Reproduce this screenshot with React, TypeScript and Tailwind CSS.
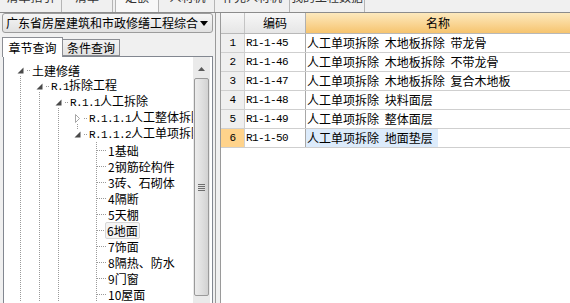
import type { ReactNode } from 'react';

const cjk = "font-['Noto_Sans_CJK_SC',sans-serif]";
const mono = "font-['Liberation_Mono',monospace] text-[11px] tracking-[-0.6px]";

type Guide = 'full' | 'down' | 'up' | 'none' | 'hline' | 'open' | 'closed' | 'openUp' | 'closedDown';

const Cell = ({ g }: { g: Guide }) => (
  <svg width="19" height="16" className="shrink-0" viewBox="0 0 19 16">
    {(g === 'full' || g === 'hline') && (
      <line x1="9.5" y1="0" x2="9.5" y2="16" stroke="#9a9a9a" strokeDasharray="1 1" />
    )}
    {(g === 'down' || g === 'open' || g === 'closedDown') && (
      <line x1="9.5" y1="8" x2="9.5" y2="16" stroke="#9a9a9a" strokeDasharray="1 1" />
    )}
    {(g === 'up' || g === 'openUp') && (
      <line x1="9.5" y1="0" x2="9.5" y2="8" stroke="#9a9a9a" strokeDasharray="1 1" />
    )}
    {(g === 'hline' || g === 'open' || g === 'openUp' || g === 'closed' || g === 'closedDown') && (
      <line x1="10" y1="8.5" x2="19" y2="8.5" stroke="#9a9a9a" strokeDasharray="1 1" />
    )}
    {(g === 'open' || g === 'openUp') && (
      <>
        <rect x="5" y="3" width="10" height="10" fill="#ffffff" />
        <polygon points="12.5,5.5 12.5,11.5 6.5,11.5" fill="#4a4a4a" />
      </>
    )}
    {(g === 'closed' || g === 'closedDown') && (
      <>
        <rect x="5" y="3" width="10" height="10" fill="#ffffff" />
        <polygon points="7.5,4.5 11.5,8.5 7.5,12.5" fill="#ffffff" stroke="#a6a6a6" />
      </>
    )}
  </svg>
);

type Row = { guides: Guide[]; label: ReactNode; selected?: boolean };

const R = ({ t }: { t: string }) => <span className={mono}>{t}</span>;

const leaves = ['1基础', '2钢筋砼构件', '3砖、石砌体', '4隔断', '5天棚', '6地面', '7饰面', '8隔热、防水', '9门窗', '10屋面'];

const rows: Row[] = [
  { guides: ['open'], label: '土建修缮' },
  { guides: ['full', 'open'], label: <><R t="R.1" />拆除工程</> },
  { guides: ['full', 'full', 'open'], label: <><R t="R.1.1" />人工拆除</> },
  { guides: ['full', 'full', 'full', 'closedDown'], label: <><R t="R.1.1.1" />人工整体拆除</> },
  { guides: ['full', 'full', 'full', 'openUp'], label: <><R t="R.1.1.2" />人工单项拆除</> },
  ...leaves.map((l) => ({
    guides: ['full', 'full', 'full', 'none', 'hline'] as Guide[],
    label: l,
    selected: l === '6地面',
  })),
];

const topTabs = [
  { t: '清单指引', w: 'w-[62px]' },
  { t: '清单', w: 'w-[51px]' },
  { t: '定额', w: 'w-[44px]', active: true },
  { t: '人材机', w: 'w-[54px]' },
  { t: '补充人材机', w: 'w-[75px]' },
  { t: '我的工程数据', w: 'w-[75px]' },
];

const items = [
  { code: 'R1-1-45', name: '人工单项拆除 木地板拆除 带龙骨' },
  { code: 'R1-1-46', name: '人工单项拆除 木地板拆除 不带龙骨' },
  { code: 'R1-1-47', name: '人工单项拆除 木地板拆除 复合木地板' },
  { code: 'R1-1-48', name: '人工单项拆除 块料面层' },
  { code: 'R1-1-49', name: '人工单项拆除 整体面层' },
  { code: 'R1-1-50', name: '人工单项拆除 地面垫层' },
];

export default function App() {
  return (
    <div className={`w-[570px] h-[303px] overflow-hidden bg-[#f0f0f0] text-[12px] text-black ${cjk}`}>
      {/* cut-off ribbon tabs */}
      <div className="flex h-[13px] border-b border-[#8c8c8c] overflow-hidden">
        {topTabs.map((tab) => (
          <div
            key={tab.t}
            className={`${tab.w} h-[12px] flex justify-center border-r border-[#b5b5b5] overflow-hidden ${tab.active ? 'bg-[#f8f8f8] border-l mx-[2px]' : ''}`}
          >
            <span className="leading-[12px] mt-[-9px] text-[#333]">{tab.t}</span>
          </div>
        ))}
      </div>

      <div className="flex h-[290px]">
        {/* left panel */}
        <div className="w-[213px] flex flex-col">
          <div className="ml-[2px] w-[211px] h-[20px] flex items-center justify-between px-[3px] border border-[#9c9c9c] rounded-[3px] bg-gradient-to-b from-[#f6f6f6] to-[#e1e1e1]">
            <span className="leading-[16px] whitespace-nowrap">广东省房屋建筑和市政修缮工程综合</span>
            <svg width="8" height="5" viewBox="0 0 8 5" className="mr-[1px]">
              <polygon points="0,0 8,0 4,5" fill="#000" />
            </svg>
          </div>

          <div className="flex items-end h-[23px] pl-[2px] relative z-10">
            <div className="h-[20px] w-[61px] bg-white border border-b-0 border-[#8c8e94] flex items-center justify-center mb-[-1px] leading-none">
              章节查询
            </div>
            <div className="h-[17px] w-[57px] border border-l-0 border-[#8c8e94] bg-gradient-to-b from-[#f3f3f3] to-[#e2e2e2] flex items-center justify-center leading-none">
              条件查询
            </div>
          </div>

          <div className="ml-[3px] flex-1 border border-b-0 border-[#828790] bg-white flex overflow-hidden">
            <div className="w-[189px] pt-[5px] overflow-hidden">
              {rows.map((r, i) => (
                <div key={i} className="h-[16px] flex items-center whitespace-nowrap pl-[7px]">
                  {r.guides.map((g, j) => (
                    <Cell key={j} g={g} />
                  ))}
                  <span
                    className={`leading-[15px] ${r.selected ? 'border border-[#d6d6d6] bg-[#f4f4f4] rounded-[2px] px-[1px] ml-[-1px]' : 'ml-[2px]'}`}
                  >
                    {r.label}
                  </span>
                </div>
              ))}
            </div>
            {/* scrollbar */}
            <div className="w-[17px] bg-[#eaeaea] flex flex-col pt-[2px]">
              <div className="h-[19px] flex items-center justify-center">
                <svg width="7" height="4" viewBox="0 0 7 4">
                  <polygon points="0,4 7,4 3.5,0" fill="#5a5a5a" />
                </svg>
              </div>
              <div className="mx-[1px] h-[218px] rounded-[2px] border border-[#9a9a9a] bg-gradient-to-r from-[#ececec] via-[#e0e0e0] to-[#d2d2d2] flex flex-col items-center justify-center gap-[1px]">
                <div className="w-[7px] h-px bg-[#6e6e6e]" />
                <div className="w-[7px] h-px bg-[#6e6e6e]" />
                <div className="w-[7px] h-px bg-[#6e6e6e]" />
                <div className="w-[7px] h-px bg-[#6e6e6e]" />
              </div>
            </div>
          </div>
        </div>

        {/* splitter */}
        <div className="w-[7px] flex">
          <div className="ml-[2px] w-px bg-[#9a9a9a]" />
        </div>

        {/* grid */}
        <div className="flex-1 bg-white border-l border-[#9a9a9a] overflow-hidden">
          <div className="grid grid-cols-[24px_61px_1fr] h-[21px] border-b border-[#b8b8b8]">
            <div className="border-r border-[#c4c4c4] bg-gradient-to-b from-[#f7f7f7] to-[#e6e6e6]" />
            <div className="border-r border-[#b0b0b0] bg-gradient-to-b from-[#f7f7f7] to-[#e6e6e6] flex items-center justify-center">
              编码
            </div>
            <div className="bg-gradient-to-b from-[#fde9bd] to-[#f6c46e] flex items-center justify-center">
              名称
            </div>
          </div>
          {items.map((it, i) => {
            const sel = i === items.length - 1;
            return (
              <div key={it.code} className="grid grid-cols-[24px_61px_1fr] h-[19px] border-b border-[#cfcfcf]">
                <div
                  className={`border-r border-[#d0d0d0] flex items-center justify-center ${mono} ${sel ? 'bg-[#ffd38b]' : 'bg-[#efefef]'}`}
                >
                  {i + 1}
                </div>
                <div className={`border-r border-[#a8a8a8] flex items-center pl-[1px] ${mono}`}>{it.code}</div>
                <div className="flex items-stretch">
                  <div className={`flex items-center pl-[1px] whitespace-nowrap [word-spacing:3px] ${sel ? 'w-[132px] bg-[#dcebfb]' : ''}`}>
                    {it.name}
                  </div>
                </div>
              </div>
            );
          })}
        </div>
      </div>
    </div>
  );
}
